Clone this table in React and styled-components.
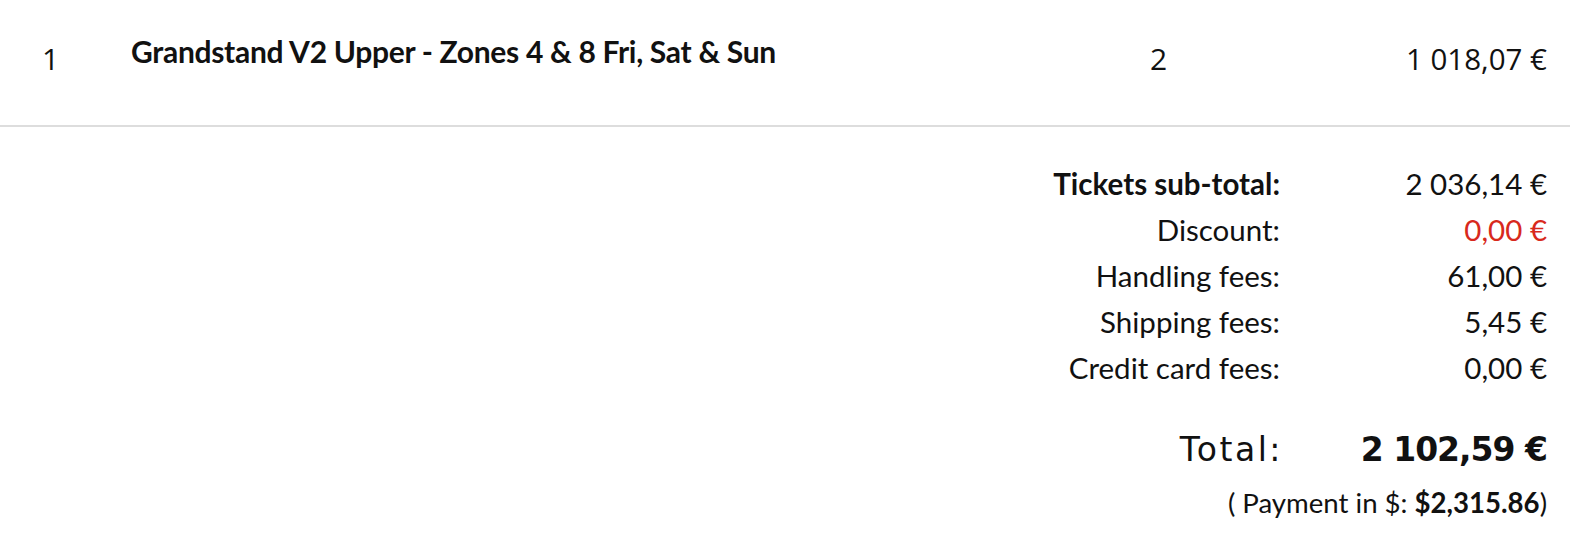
import React from "react";
import styled, { createGlobalStyle } from "styled-components";

const GlobalStyle = createGlobalStyle`
  html, body {
    margin: 0;
    padding: 0;
    background: #ffffff;
  }
  body {
    font-family: "Lato", "Liberation Sans", sans-serif;
    color: #111111;
  }
`;

const Wrapper = styled.div`
  width: 1570px;
  box-sizing: border-box;
`;

const ItemRow = styled.div`
  display: grid;
  grid-template-columns: 131px 1fr 200px 260px;
  align-items: start;
  height: 127px;
  box-sizing: border-box;
  padding: 33px 23px 0 0;
  border-bottom: 2px solid #dddddd;
`;

const Index = styled.div`
  font-family: "Open Sans", sans-serif;
  font-size: 30px;
  padding-left: 42px;
  padding-top: 5px;
`;

const Title = styled.div`
  font-size: 30px;
  font-weight: 700;
  letter-spacing: -0.3px;
`;

const Qty = styled.div`
  font-family: "Open Sans", sans-serif;
  font-size: 30px;
  padding-top: 5px;
  padding-left: 63px;
`;

const Price = styled.div`
  font-family: "Open Sans", sans-serif;
  font-size: 29.5px;
  padding-top: 5px;
  text-align: right;
`;

const Summary = styled.div`
  display: grid;
  grid-template-columns: 1fr 267px;
  padding: 34px 23px 0 0;
`;

const Label = styled.div`
  text-align: right;
  font-size: 29.5px;
  line-height: 46px;
  font-weight: ${(p) => (p.$bold ? 700 : 400)};
`;

const Value = styled.div`
  text-align: right;
  font-size: 29.5px;
  line-height: 46px;
  font-weight: 400;
  color: ${(p) => (p.$red ? "#d8291c" : "#111111")};
`;

const TotalLabel = styled.div`
  text-align: right;
  font-family: "DejaVu Sans", sans-serif;
  font-size: 33px;
  letter-spacing: 2.5px;
  margin: 36px -6px 0 0;
  padding-right: 3px;
  line-height: 46px;
`;

const TotalValue = styled.div`
  text-align: right;
  font-family: "DejaVu Sans", sans-serif;
  font-weight: 700;
  font-size: 33px;
  letter-spacing: -1px;
  margin-top: 36px;
  line-height: 46px;
`;

const Payment = styled.div`
  grid-column: 1 / span 2;
  text-align: right;
  font-size: 27.6px;
  font-weight: 400;
  margin-top: 13px;

  strong {
    font-weight: 700;
  }
`;

const lines = [
  { label: "Tickets sub-total:", value: "2 036,14 €", bold: true },
  { label: "Discount:", value: "0,00 €", red: true },
  { label: "Handling fees:", value: "61,00 €" },
  { label: "Shipping fees:", value: "5,45 €" },
  { label: "Credit card fees:", value: "0,00 €" },
];

export default function App() {
  return (
    <Wrapper>
      <GlobalStyle />
      <ItemRow>
        <Index>1</Index>
        <Title>Grandstand V2 Upper - Zones 4 &amp; 8 Fri, Sat &amp; Sun</Title>
        <Qty>2</Qty>
        <Price>1 018,07 €</Price>
      </ItemRow>
      <Summary>
        {lines.map((l) => (
          <React.Fragment key={l.label}>
            <Label $bold={l.bold}>{l.label}</Label>
            <Value $red={l.red}>{l.value}</Value>
          </React.Fragment>
        ))}
        <TotalLabel>Total:</TotalLabel>
        <TotalValue>2 102,59 €</TotalValue>
        <Payment>
          ( Payment in $: <strong>$2,315.86</strong>)
        </Payment>
      </Summary>
    </Wrapper>
  );
}
